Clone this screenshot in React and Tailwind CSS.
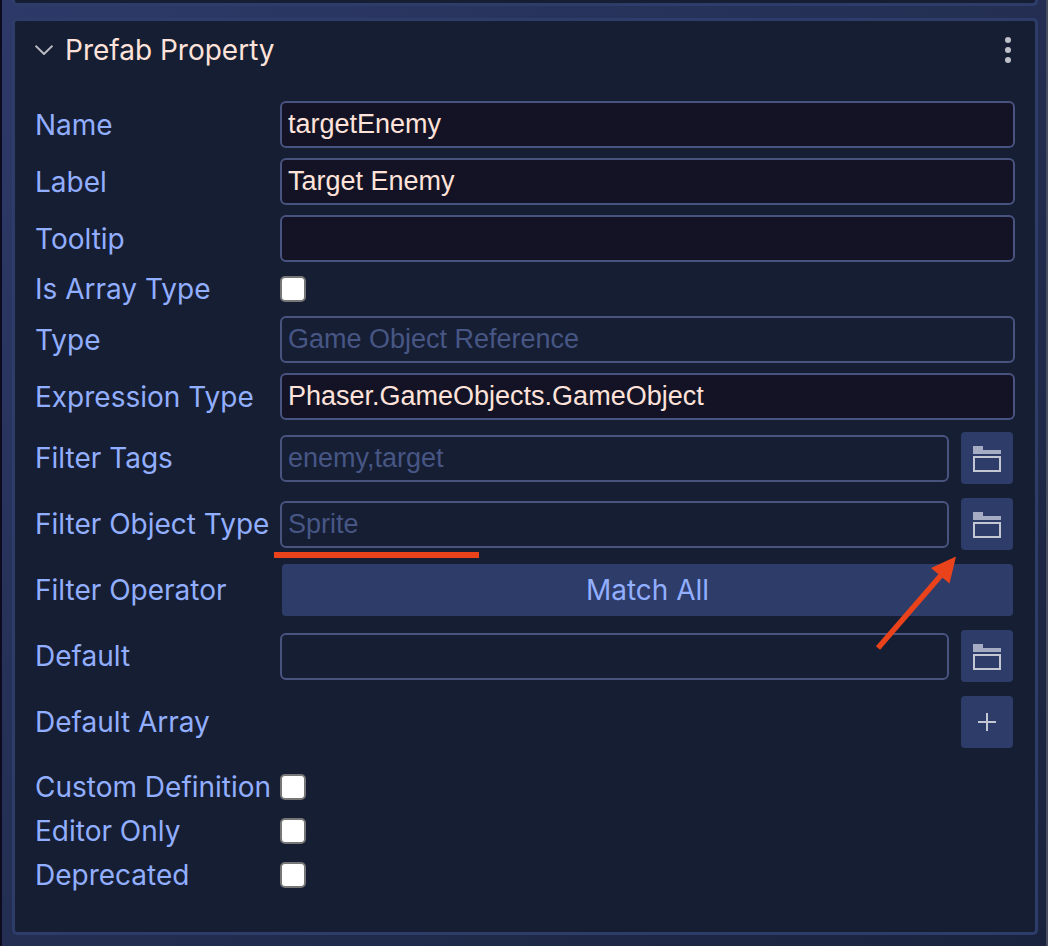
import React, { useState } from "react";

const labelClass = "w-[245px] shrink-0 whitespace-nowrap text-[28px] leading-[34px] text-[#92aeff]";

function FolderIcon() {
  return (
    <svg className="mt-0.5 h-[26px] w-7" viewBox="0 0 28 26" fill="none" aria-hidden="true">
      <path d="M0 0h10v4h18v4H0z" fill="#a6acc3" />
      <path d="M1 11h26v14H1z" stroke="#c3c7d4" strokeWidth="2" />
    </svg>
  );
}

function PlusIcon() {
  return (
    <svg className="h-[18px] w-[18px]" viewBox="0 0 18 18" fill="none" aria-hidden="true">
      <path d="M9 0v18M0 9h18" stroke="#c3c7d4" strokeWidth="2" />
    </svg>
  );
}

function IconButton({ label, children }) {
  return (
    <button
      type="button"
      aria-label={label}
      className="mr-0.5 flex h-[52px] w-[52px] shrink-0 items-center justify-center rounded-[4px] bg-[#2d3c68] hover:bg-[#37487b]"
    >
      {children}
    </button>
  );
}

function TextField({ id, value, readOnly }) {
  const [text, setText] = useState(value || "");

  return (
    <input
      id={id}
      type="text"
      value={text}
      readOnly={readOnly}
      onChange={(e) => setText(e.target.value)}
      className={`h-[47px] w-full min-w-0 rounded-[6px] border-2 border-[#48547f] px-1.5 font-['Liberation_Sans',Arial,sans-serif] text-[27px] leading-8 outline-none ${
        readOnly ? "bg-transparent text-[#475684]" : "bg-[#141326] text-[#ffe3da]"
      }`}
    />
  );
}

function TextRow({ id, label, value, readOnly }) {
  return (
    <div className="flex items-center">
      <label htmlFor={id} className={labelClass}>{label}</label>
      <TextField id={id} value={value} readOnly={readOnly} />
    </div>
  );
}

function CheckRow({ id, label }) {
  return (
    <div className="flex items-center">
      <label htmlFor={id} className={labelClass}>{label}</label>
      <input
        id={id}
        type="checkbox"
        className="h-[26px] w-[26px] appearance-none rounded-[5px] border-2 border-[#767676] bg-white checked:bg-[#92aeff]"
      />
    </div>
  );
}

function BrowseRow({ id, label, value, readOnly, children }) {
  return (
    <div className="relative flex items-center">
      <label htmlFor={id} className={labelClass}>{label}</label>
      <div className="mr-3 min-w-0 flex-1">
        <TextField id={id} value={value} readOnly={readOnly} />
      </div>
      <IconButton label={`Browse ${label}`}>
        <FolderIcon />
      </IconButton>
      {children}
    </div>
  );
}

export default function App() {
  const [matchAll, setMatchAll] = useState(true);

  return (
    <div className="min-h-screen border-l-2 border-r-2 border-l-[#0d0b20] border-r-[#484e60] bg-gradient-to-br from-[#2d3a69] via-[#232e52] to-[#1a233d] pr-2 pb-[11px] pl-2.5 font-[Inter,sans-serif]">
      <div className="h-1.5 rounded-b-[5px] border-3 border-t-0 border-[#2d3c69] bg-[#161e34]"></div>

      <section className="mt-3 rounded-[5px] border-3 border-[#2d3c69] bg-[#161e34] px-5 pb-10">
        <header className="flex h-20 items-start justify-between pt-2">
          <button type="button" className="flex h-[42px] items-center gap-3 text-[#ffe3da]">
            <svg className="h-[10px] w-[18px]" viewBox="0 0 18 10" fill="none" aria-hidden="true">
              <path d="M0.5 0.7L9 9L17.5 0.7" stroke="#b9bcc3" strokeWidth="2" />
            </svg>
            <h2 className="text-[28px] leading-10">Prefab Property</h2>
          </button>
          <button type="button" aria-label="More options" className="mr-1 flex h-[42px] items-center">
            <svg className="h-[26px] w-1.5" viewBox="0 0 6 26" fill="#bfc1c8" aria-hidden="true">
              <circle cx="3" cy="3" r="3" />
              <circle cx="3" cy="13" r="3" />
              <circle cx="3" cy="23" r="3" />
            </svg>
          </button>
        </header>

        <div className="flex flex-col gap-2.5">
          <TextRow id="name" label="Name" value="targetEnemy" />
          <TextRow id="label" label="Label" value="Target Enemy" />
          <TextRow id="tooltip" label="Tooltip" />
          <CheckRow id="is-array" label="Is Array Type" />
          <TextRow id="type" label="Type" value="Game Object Reference" readOnly />
          <TextRow id="expression-type" label="Expression Type" value="Phaser.GameObjects.GameObject" />
        </div>

        <div className="mt-3 flex flex-col gap-3.5">
          <BrowseRow id="filter-tags" label="Filter Tags" value="enemy,target" readOnly />
          <BrowseRow id="filter-object-type" label="Filter Object Type" value="Sprite" readOnly>
            {/* callout: underline below the field and arrow to the browse button */}
            <div className="absolute top-[54px] left-[239px] h-1.5 w-[205px] bg-[#ea431c]"></div>
            <svg
              className="pointer-events-none absolute top-[58px] right-[58px] z-10 h-[94px] w-[82px]"
              viewBox="0 0 82 94"
              aria-hidden="true"
            >
              <path d="M3 92L68 17" stroke="#ea431c" strokeWidth="5.5" />
              <path d="M81 0.5L56 12L74.5 27.5Z" fill="#ea431c" />
            </svg>
          </BrowseRow>

          <div className="flex items-center">
            <span id="filter-operator" className={labelClass}>Filter Operator</span>
            <button
              type="button"
              aria-describedby="filter-operator"
              onClick={() => setMatchAll(!matchAll)}
              className="mx-0.5 h-[52px] flex-1 rounded-[4px] bg-[#2d3c68] text-[28px] leading-[34px] text-[#92aeff] hover:bg-[#37487b]"
            >
              {matchAll ? "Match All" : "Match Any"}
            </button>
          </div>

          <BrowseRow id="default" label="Default" readOnly />

          <div className="flex items-center justify-between">
            <span className={labelClass}>Default Array</span>
            <IconButton label="Add default value">
              <PlusIcon />
            </IconButton>
          </div>
        </div>

        <div className="mt-[22px] flex flex-col gap-2.5">
          <CheckRow id="custom-definition" label="Custom Definition" />
          <CheckRow id="editor-only" label="Editor Only" />
          <CheckRow id="deprecated" label="Deprecated" />
        </div>
      </section>
    </div>
  );
}
